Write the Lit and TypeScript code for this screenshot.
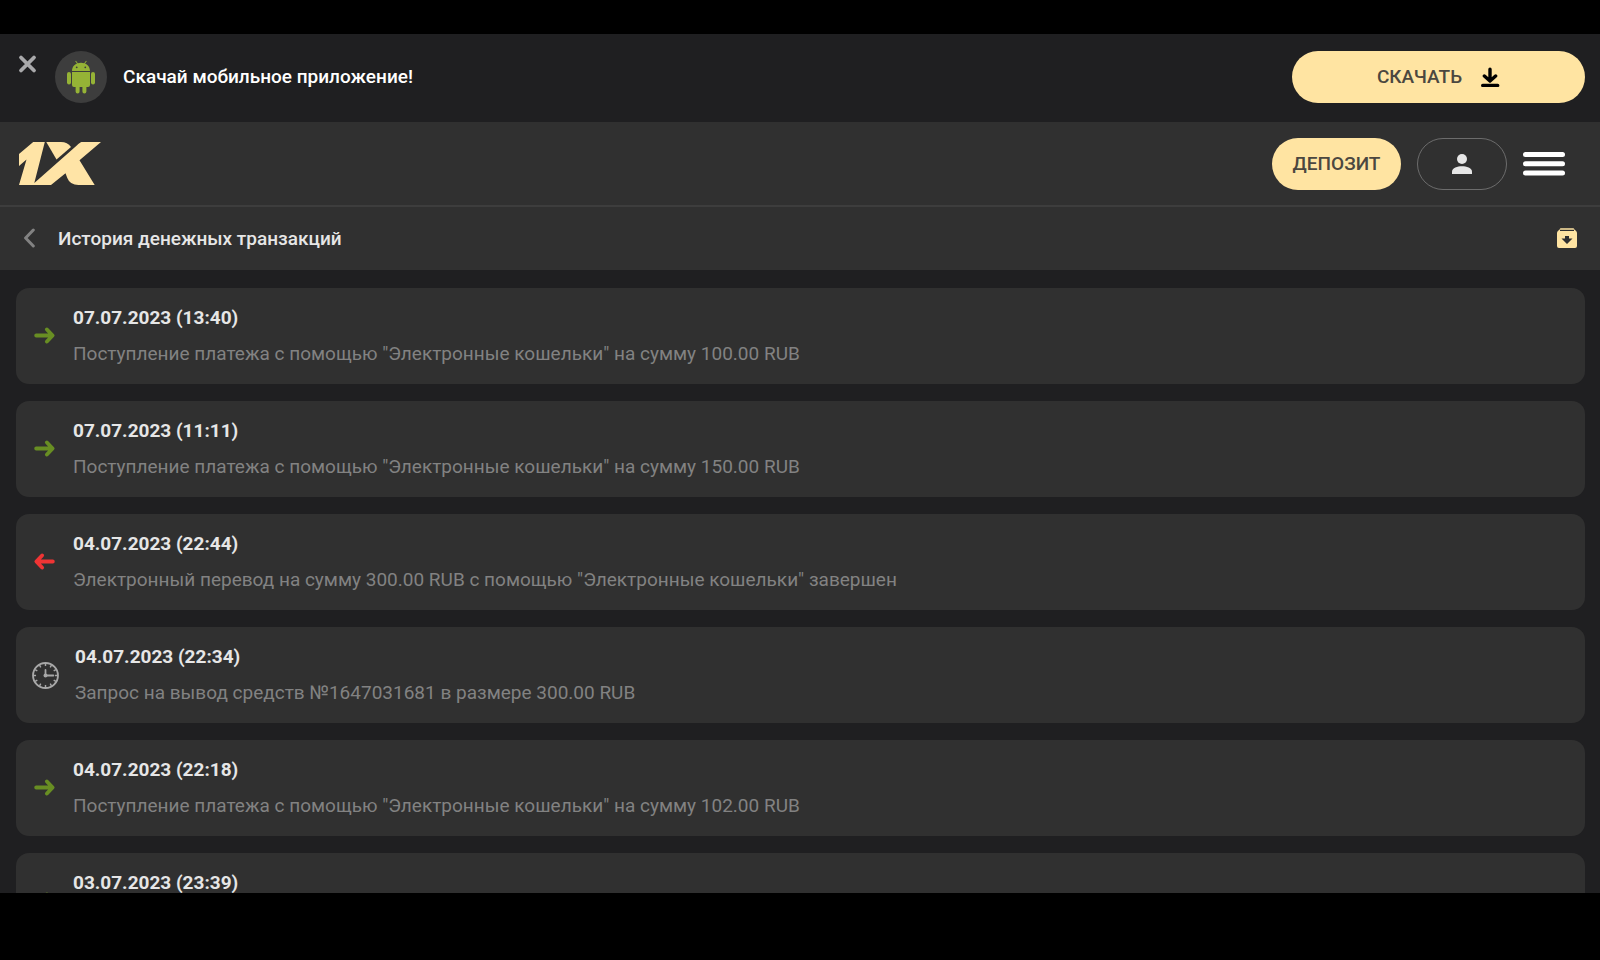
import { LitElement, html, css, svg } from "lit";
import { customElement, property } from "lit/decorators.js";

type Kind = "in" | "out" | "pending";

interface Transaction {
  kind: Kind;
  date: string;
  text: string;
}

const TRANSACTIONS: Transaction[] = [
  { kind: "in", date: "07.07.2023 (13:40)", text: 'Поступление платежа с помощью "Электронные кошельки" на сумму 100.00 RUB' },
  { kind: "in", date: "07.07.2023 (11:11)", text: 'Поступление платежа с помощью "Электронные кошельки" на сумму 150.00 RUB' },
  { kind: "out", date: "04.07.2023 (22:44)", text: 'Электронный перевод на сумму 300.00 RUB с помощью "Электронные кошельки" завершен' },
  { kind: "pending", date: "04.07.2023 (22:34)", text: "Запрос на вывод средств №1647031681 в размере 300.00 RUB" },
  { kind: "in", date: "04.07.2023 (22:18)", text: 'Поступление платежа с помощью "Электронные кошельки" на сумму 102.00 RUB' },
  { kind: "in", date: "03.07.2023 (23:39)", text: "" },
];

@customElement("transaction-card")
export class TransactionCard extends LitElement {
  @property() kind: Kind = "in";
  @property() date = "";
  @property() text = "";

  static styles = css`
    :host {
      display: flex;
      align-items: center;
      gap: 16px;
      box-sizing: border-box;
      min-height: 96px;
      padding: 12px 16px;
      border-radius: 13px;
      background: #303030;
    }
    .icon {
      flex: none;
      display: block;
      width: 25px;
      height: 26px;
    }
    .in { color: #688e23; }
    .out { color: #ef3434; }
    .pending { width: 27px; height: 27px; color: #a8a8a8; }
    .body {
      display: flex;
      flex-direction: column;
      gap: 12px;
      min-width: 0;
    }
    .date, .text {
      margin: 0;
      font-size: 19px;
      line-height: 24px;
      min-height: 24px;
    }
    .date { font-weight: 700; color: #e6e6e6; }
    .text { color: #828282; }
  `;

  private renderIcon() {
    if (this.kind === "pending") {
      const ticks = Array.from({ length: 12 }, (_, i) => i * 30);
      return html`<svg class="icon pending" viewBox="0 0 26 26" fill="none" stroke="currentColor" aria-hidden="true">
        <circle cx="13" cy="13" r="12" stroke-width="1.8"></circle>
        ${ticks.map((a) => svg`<path d="M13 1.5V3.9" stroke-width="1.4" transform="rotate(${a} 13 13)"></path>`)}
        <path d="M13 7.7V13H20.6" stroke-width="1.7" stroke-linecap="round"></path>
        <circle cx="13" cy="13" r="1.9" fill="currentColor" stroke="none"></circle>
      </svg>`;
    }
    const d = this.kind === "in" ? "M4.2 12.5H19.8M14.9 6.5L20.6 12.5L14.9 18.500" : "M20.8 12.5H5.2M10.1 6.5L4.4 12.5L10.1 18.500";
    return html`<svg class="icon ${this.kind}" viewBox="0 0 25 26" fill="none" stroke="currentColor"
      stroke-width="3.9" stroke-linecap="round" stroke-linejoin="round" aria-hidden="true"><path d=${d}></path></svg>`;
  }

  render() {
    return html`
      ${this.renderIcon()}
      <div class="body">
        <h2 class="date">${this.date}</h2>
        <p class="text">${this.text}</p>
      </div>
    `;
  }
}

@customElement("app-root")
export class AppRoot extends LitElement {
  static styles = css`
    :host {
      display: flex;
      flex-direction: column;
      box-sizing: border-box;
      height: 100vh;
      padding: 34px 0 67px;
      overflow: hidden;
      background: #000;
      font-family: Roboto, "Liberation Sans", sans-serif;
      font-size: 19px;
      line-height: 24px;
      color: #e6e6e6;
    }
    svg { display: block; flex: none; }
    button, a {
      box-sizing: border-box;
      margin: 0;
      padding: 0;
      border: 0;
      background: none;
      color: inherit;
      font: inherit;
      text-decoration: none;
      cursor: pointer;
    }
    .screen {
      flex: 1;
      min-height: 0;
      overflow: hidden;
      display: flex;
      flex-direction: column;
      background: #1f1f21;
    }
    .banner, .header, .title-bar {
      flex: none;
      display: flex;
      align-items: center;
      box-sizing: border-box;
    }
    .banner { min-height: 88px; padding: 0 15px 2px 18px; }
    .close { align-self: flex-start; margin: 20px 17px 0 0; color: #a9a9ab; }
    .android {
      display: grid;
      place-items: center;
      width: 52px;
      height: 52px;
      margin-right: 16px;
      border-radius: 50%;
      background: #3d3d3d;
    }
    .promo { flex: 1; margin: 0; font-weight: 500; color: #fff; }
    .download, .deposit, .profile {
      display: flex;
      align-items: center;
      justify-content: center;
      height: 52px;
      border-radius: 26px;
    }
    .download, .deposit { background: #ffe4a2; color: #4b4740; font-weight: 500; }
    .download { gap: 18px; width: 293px; }
    .header {
      min-height: 85px;
      padding: 0 35px 0 19px;
      gap: 16px;
      background: #303030;
      border-bottom: 2px solid #3d3d3d;
    }
    .logo { margin-right: auto; }
    .deposit { width: 129px; }
    .profile { width: 90px; border: 1px solid #6c6c6c; }
    .title-bar { min-height: 63px; padding: 0 23px 0 20px; background: #303030; }
    .back { margin-right: 20px; color: #828282; }
    .title { flex: 1; margin: 0; font-size: 19px; font-weight: 500; color: #e6e6e6; }
    .list {
      display: flex;
      flex-direction: column;
      gap: 17px;
      margin: 0;
      padding: 18px 15px 0 16px;
    }
  `;

  render() {
    return html`
      <div class="screen">
        <section class="banner">
          <button class="close" aria-label="Закрыть">
            <svg width="20" height="20" viewBox="0 0 20 20" fill="none" stroke="currentColor" stroke-width="3.8" stroke-linecap="round"><path d="M3 3.5L16 16.5M16 3.5L3 16.5"></path></svg>
          </button>
          <span class="android" aria-hidden="true">
            <svg width="28" height="34" viewBox="0 0 28 34" fill="#95b336">
              <rect x="0" y="12" width="4" height="12.5" rx="2"></rect>
              <rect x="24" y="12" width="4" height="12.5" rx="2"></rect>
              <path d="M5 12H23V25Q23 27 21 27H19.4V31.6A2 2 0 0 1 15.4 31.6V27H12.6V31.6A2 2 0 0 1 8.6 31.6V27H7Q5 27 5 25Z"></path>
              <path d="M5 11C5 7 7.600 4.600 10 3.600L8.200 1.200L9 .7L10.800 3.300C12.800 2.600 15.200 2.600 17.200 3.300L19 .7L19.800 1.200L18 3.600C20.400 4.600 23 7 23 11Z"></path>
              <circle cx="9.700" cy="7.300" r=".9" fill="#3d3d3d"></circle>
              <circle cx="18.300" cy="7.300" r=".9" fill="#3d3d3d"></circle>
            </svg>
          </span>
          <p class="promo">Скачай мобильное приложение!</p>
          <a class="download" href="#">
            <span>СКАЧАТЬ</span>
            <svg width="20" height="20" viewBox="0 0 20 20" fill="none" stroke="#000" stroke-width="3.4" stroke-linecap="round" stroke-linejoin="round" aria-hidden="true"><path d="M10 2.2V13.400M4.400 9L10 14L15.600 9M2.700 18.400H17.700"></path></svg>
          </a>
        </section>

        <header class="header">
          <a class="logo" href="#" aria-label="1X">
            <svg width="82" height="43" viewBox="0 0 82 43" fill="#ffe4a6">
              <path d="M14.2 0H25.8L15.3 41L57.5 3.7Q61.500 0 62.500 0H82L60.500 18.300L75.700 43H59.500Q51 43 48.300 36L46.500 31.200L32 43H0L7.500 17.500L0 24V12Z"></path>
              <path d="M27.300 0H42Q48.500 0 52 5L37.500 17.500Z"></path>
            </svg>
          </a>
          <button class="deposit">ДЕПОЗИТ</button>
          <button class="profile" aria-label="Профиль">
            <svg width="20" height="20" viewBox="0 0 20 20" fill="#e6e6e6"><circle cx="10" cy="5" r="5"></circle><path d="M0 20V17.500C0 14 5.500 12.300 10 12.300S20 14 20 17.500V20Z"></path></svg>
          </button>
          <button class="menu" aria-label="Меню">
            <svg width="42" height="24" viewBox="0 0 42 24" fill="#fff"><rect width="42" height="5" rx="2.500"></rect><rect y="9.300" width="42" height="5" rx="2.500"></rect><rect y="18.600" width="42" height="5" rx="2.500"></rect></svg>
          </button>
        </header>

        <div class="title-bar">
          <button class="back" aria-label="Назад">
            <svg width="18" height="21" viewBox="0 0 18 21" fill="none" stroke="currentColor" stroke-width="3" stroke-linecap="round" stroke-linejoin="round"><path d="M13.300 2L5.600 10L13.300 18"></path></svg>
          </button>
          <h1 class="title">История денежных транзакций</h1>
          <button class="archive" aria-label="Архив">
            <svg width="20" height="21" viewBox="0 0 20 21" fill="#ffe4a2">
              <path d="M3.500 0H16.500L18 2H2Z" opacity=".75"></path>
              <path fill-rule="evenodd" d="M1.200 2.700L2 2H3V3H17V2H18L18.800 2.700Q20 3.700 20 5V18Q20 20 18 20H2Q0 20 0 18V5Q0 3.700 1.200 2.700ZM8 8V10.500H4.500L10 16L15.500 10.500H12V8Z"></path>
            </svg>
          </button>
        </div>

        <main class="list">
          ${TRANSACTIONS.map((t) => html`<transaction-card .kind=${t.kind} .date=${t.date} .text=${t.text}></transaction-card>`)}
        </main>
      </div>
    `;
  }
}
